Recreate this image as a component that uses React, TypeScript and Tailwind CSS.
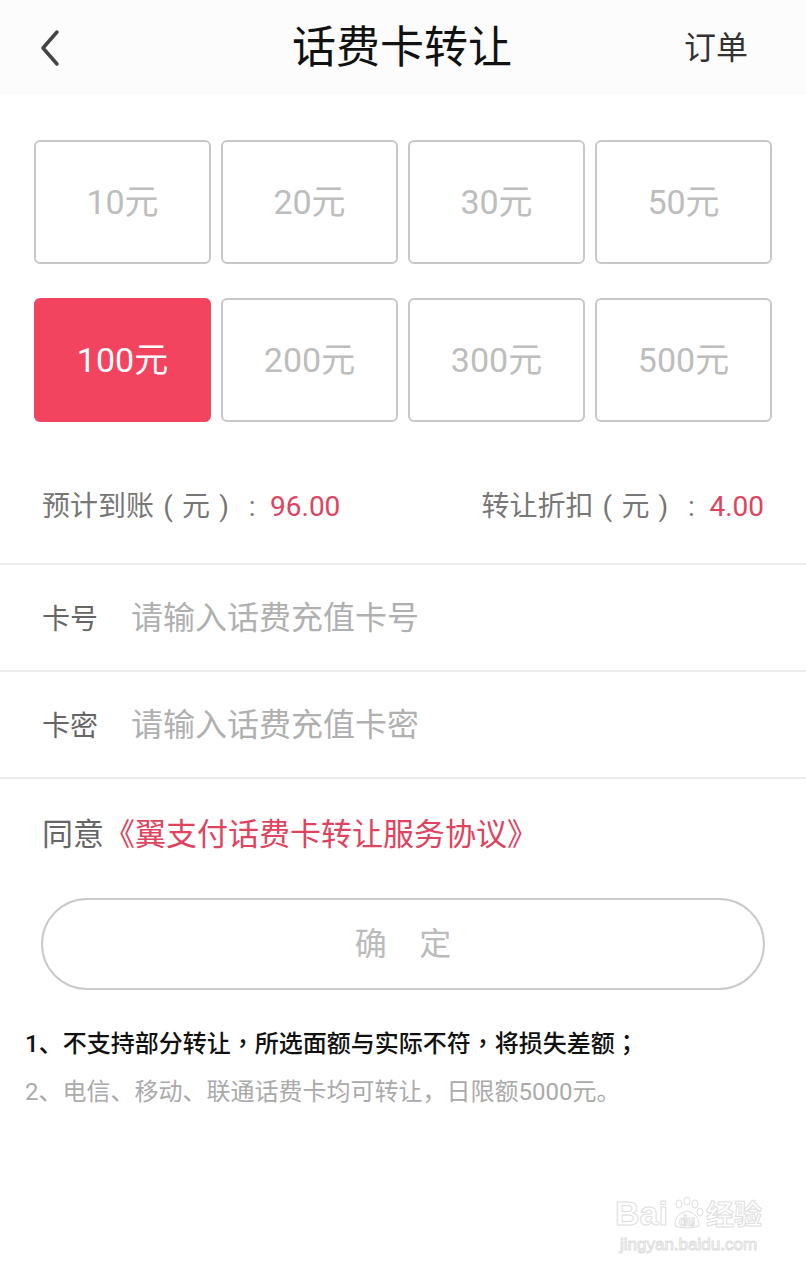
import { useState } from "react";

const amounts = ["10元", "20元", "30元", "50元", "100元", "200元", "300元", "500元"];

const tc = "font-['Noto_Sans_CJK_TC',sans-serif]";

function Punct({ c }: { c: string }) {
  return <span className="inline-block w-[28px] text-center">{c}</span>;
}

export default function App() {
  const [selected, setSelected] = useState(4);

  return (
    <div className="relative min-h-[1280px] w-[806px] bg-white font-['Roboto','Noto_Sans_CJK_SC',sans-serif] [text-spacing-trim:space-all]">
      {/* header */}
      <div className="flex h-[95px] items-center justify-between bg-[#fcfcfc] pl-[36px] pr-[58px]">
        <svg width="28" height="40" viewBox="0 0 28 40" className="text-[#444]">
          <path d="M21 4 L7 20 L21 36" fill="none" stroke="currentColor" strokeWidth="3.5" strokeLinecap="round" strokeLinejoin="round" />
        </svg>
        <div className="pl-[56px] text-[44px] leading-none text-[#111]">话费卡转让</div>
        <div className="text-[32px] leading-none text-[#333]">订单</div>
      </div>

      {/* amount grid */}
      <div className="mt-[45px] grid grid-cols-4 gap-x-[10px] gap-y-[34px] px-[34px]">
        {amounts.map((a, i) => (
          <button
            key={a}
            onClick={() => setSelected(i)}
            className={
              i === selected
                ? "flex h-[124px] items-center justify-center rounded-[6px] border-2 border-[#f3445f] bg-[#f3445f] text-[34px] text-white"
                : "flex h-[124px] items-center justify-center rounded-[6px] border-2 border-[#c8c8c8] bg-white text-[34px] text-[#bdbdbd]"
            }
          >
            {a}
          </button>
        ))}
      </div>

      {/* info row */}
      <div className="mt-[65px] mb-[36px] flex h-[40px] items-center justify-between pl-[42px] pr-[42px] text-[28px] text-[#777]">
        <div className="flex items-center">
          预计到账<Punct c="(" />元<Punct c=")" /><Punct c=":" />
          <span className="pl-[4px] text-[#e0435e]">96.00</span>
        </div>
        <div className="flex items-center">
          转让折扣<Punct c="(" />元<Punct c=")" /><Punct c=":" />
          <span className="pl-[4px] text-[#e0435e]">4.00</span>
        </div>
      </div>

      <div className="h-[2px] bg-[#ececec]" />
      <div className="flex h-[105px] items-center pl-[42px]">
        <span className="w-[89px] pt-[4px] text-[28px] text-[#666]">卡号</span>
        <input
          placeholder="请输入话费充值卡号"
          className="flex-1 bg-transparent text-[32px] text-[#333] outline-none placeholder:text-[#b0b0b0]"
        />
      </div>
      <div className="h-[2px] bg-[#ececec]" />
      <div className="flex h-[105px] items-center pl-[42px]">
        <span className="w-[89px] pt-[4px] text-[28px] text-[#666]">卡密</span>
        <input
          type="text"
          placeholder="请输入话费充值卡密"
          className="flex-1 bg-transparent text-[32px] text-[#333] outline-none placeholder:text-[#b0b0b0]"
        />
      </div>
      <div className="h-[2px] bg-[#ececec]" />

      {/* agreement */}
      <div className="mt-[36px] flex h-[40px] items-center pl-[42px] text-[31px] text-[#666]">
        同意<span className="text-[#e0435e]">《翼支付话费卡转让服务协议》</span>
      </div>

      {/* confirm */}
      <div className="mt-[43px] px-[41px]">
        <button className="flex h-[92px] w-full items-center justify-center rounded-full border-2 border-[#cacaca] text-[32px] text-[#bbbbbb]">
          确&emsp;定
        </button>
      </div>

      {/* notes */}
      <div className="mt-[28px] px-[25px] text-[24px] leading-[48px]">
        <div className="font-medium text-[#111]">
          1、不支持部分转让<span className={tc}>，</span>所选面额与实际不符<span className={tc}>，</span>将损失差额<span className={tc}>；</span>
        </div>
        <div className="text-[#aaaaaa]">2、电信、移动、联通话费卡均可转让，日限额5000元。</div>
      </div>

      {/* watermark */}
      <div className="absolute right-[44px] top-[1196px] flex flex-col items-center text-transparent [-webkit-text-stroke:1px_#dedede]">
        <div className="flex items-end">
          <span className="font-['Liberation_Sans',sans-serif] text-[34px] font-bold leading-none">Bai</span>
          <span className="relative mx-[2px] flex h-[34px] w-[34px] items-end justify-center">
            <svg width="34" height="34" viewBox="0 0 34 34" className="absolute inset-0">
              <g fill="none" stroke="#dedede" strokeWidth="1">
                <ellipse cx="9" cy="8" rx="3" ry="4" />
                <ellipse cx="17" cy="5" rx="3" ry="4" />
                <ellipse cx="25" cy="8" rx="3" ry="4" />
                <ellipse cx="30" cy="16" rx="3" ry="4" />
                <path d="M5 30 Q4 18 17 15 Q30 18 29 30 Q17 34 5 30 Z" />
              </g>
            </svg>
            <span className="relative pb-[2px] text-[14px] font-bold leading-none">du</span>
          </span>
          <span className="text-[28px] font-bold leading-none">经验</span>
        </div>
        <div className="mt-[6px] font-['Liberation_Sans',sans-serif] text-[17px] leading-none">jingyan.baidu.com</div>
      </div>
    </div>
  );
}
